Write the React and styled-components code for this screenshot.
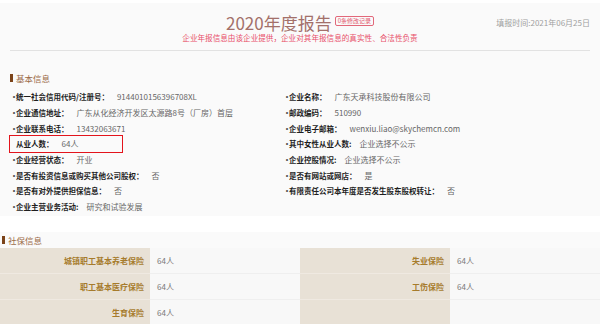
import React from 'react';
import styled, { createGlobalStyle } from 'styled-components';

const GlobalStyle = createGlobalStyle`
  body {
    margin: 0;
    background: #fff;
    font-family: "Noto Sans CJK SC", "Noto Sans", sans-serif;
  }
`;

const Page = styled.div`
  width: 600px;
  height: 324px;
  overflow: hidden;
`;

const Panel = styled.div`
  margin-top: 3px;
  background: #fafafa;
  padding-bottom: 1px;
`;

const Header = styled.div`
  margin: 0 10px;
  padding-top: 10px;
  padding-bottom: 8px;
  border-bottom: 1px solid #e2e2e2;
`;

const TitleRow = styled.div`
  display: grid;
  grid-template-columns: 1fr auto 1fr;
  align-items: center;
  height: 19px;
`;

const TitleGroup = styled.div`
  grid-column: 2;
  display: flex;
  align-items: center;
  gap: 3px;
`;

const Title = styled.h1`
  margin: 0;
  font-size: 17px;
  line-height: 19px;
  font-weight: 400;
  color: #a3706a;
`;

const Badge = styled.span`
  font-size: 6px;
  line-height: 8px;
  padding: 0 2px;
  border: 1px solid #e2687a;
  border-radius: 2px;
  color: #e2566c;
  margin-top: -3px;
`;

const FillDate = styled.span`
  justify-self: end;
  font-size: 8px;
  color: #a0a0a0;
`;

const Notice = styled.div`
  margin-top: 1px;
  text-align: center;
  font-size: 7.6px;
  line-height: 9px;
  color: #e8506a;
`;

const SectionTitle = styled.div`
  display: flex;
  align-items: center;
  gap: 3px;
  height: ${(props) => props.tall ? '16px' : '10px'};
  margin: ${(props) => props.tall ? '16px 0 0' : '22px 0 6px'};
  padding-left: ${(props) => props.tall ? '2px' : '10px'};
  background: ${(props) => props.tall ? '#fafafa' : 'transparent'};
  font-size: 8.5px;
  color: #9a6a48;

  &::before {
    content: '';
    width: 3px;
    height: 8px;
    background: #7b4319;
  }
`;

const InfoGrid = styled.div`
  display: grid;
  grid-template-columns: 273px 1fr;
  padding-left: 10px;
`;

const InfoItem = styled.div`
  display: flex;
  align-items: center;
  height: 15.7px;
  font-size: 8px;
  white-space: nowrap;
  width: ${(props) => props.boxed ? '112px' : 'auto'};
  outline: ${(props) => props.boxed ? '1.5px solid #e3141c' : 'none'};

  &::before {
    content: '·';
    width: 6px;
    color: ${(props) => props.boxed ? 'transparent' : '#555'};
    font-weight: 700;
  }
`;

const Label = styled.span`
  font-size: 7.5px;
  font-weight: 700;
  color: #1e1e1e;
  margin-right: 8px;
`;

const Value = styled.span`
  color: #666;
`;

const Table = styled.div`
  display: grid;
  grid-template-columns: repeat(4, 150px);
`;

const Cell = styled.div`
  height: 26px;
  display: flex;
  align-items: center;
  font-size: 8px;
  box-sizing: border-box;
  justify-content: ${(props) => props.head ? 'flex-end' : 'flex-start'};
  padding: ${(props) => props.head ? '0 6px 0 0' : '0 0 0 7px'};
  background: ${(props) => props.head ? '#e8e1d6' : '#f8f8f8'};
  color: ${(props) => props.head ? '#a67b2c' : '#777'};
  font-weight: ${(props) => props.head ? 700 : 400};
  border-bottom: 1px solid ${(props) => props.head ? '#efe9e1' : '#efefef'};
`;

const basic = [
  ['统一社会信用代码/注册号：', '9144010156396708XL'],
  ['企业名称：', '广东天承科技股份有限公司'],
  ['企业通信地址：', '广东从化经济开发区太源路8号（厂房）首层'],
  ['邮政编码：', '510990'],
  ['企业联系电话：', '13432063671'],
  ['企业电子邮箱：', 'wenxiu.liao@skychemcn.com'],
  ['从业人数：', '64人', true],
  ['其中女性从业人数:', '企业选择不公示'],
  ['企业经营状态：', '开业'],
  ['企业控股情况:', '企业选择不公示'],
  ['是否有投资信息或购买其他公司股权：', '否'],
  ['是否有网站或网店：', '是'],
  ['是否有对外提供担保信息：', '否'],
  ['有限责任公司本年度是否发生股东股权转让：', '否'],
  ['企业主营业务活动:', '研究和试验发展'],
];

const social = [
  ['城镇职工基本养老保险', '64人', '失业保险', '64人'],
  ['职工基本医疗保险', '64人', '工伤保险', '64人'],
  ['生育保险', '64人', '', ''],
];

const App = () => {
  return (
    <Page>
      <GlobalStyle />
      <Panel>
        <Header>
          <TitleRow>
            <TitleGroup>
              <Title>2020年度报告</Title>
              <Badge>0条修改记录</Badge>
            </TitleGroup>
            <FillDate>填报时间:2021年06月25日</FillDate>
          </TitleRow>
          <Notice>企业年报信息由该企业提供，企业对其年报信息的真实性、合法性负责</Notice>
        </Header>

        <SectionTitle>基本信息</SectionTitle>
        <InfoGrid>
          {basic.map(([label, value, boxed]) => (
            <InfoItem key={label} boxed={boxed}>
              <Label>{label}</Label>
              <Value>{value}</Value>
            </InfoItem>
          ))}
        </InfoGrid>
      </Panel>

      <SectionTitle tall>社保信息</SectionTitle>
      <Table>
        {social.map((row) =>
          row.map((text, i) => (
            <Cell key={row[0] + i} head={i % 2 === 0}>
              {text}
            </Cell>
          ))
        )}
      </Table>
    </Page>
  );
};

export default App;
